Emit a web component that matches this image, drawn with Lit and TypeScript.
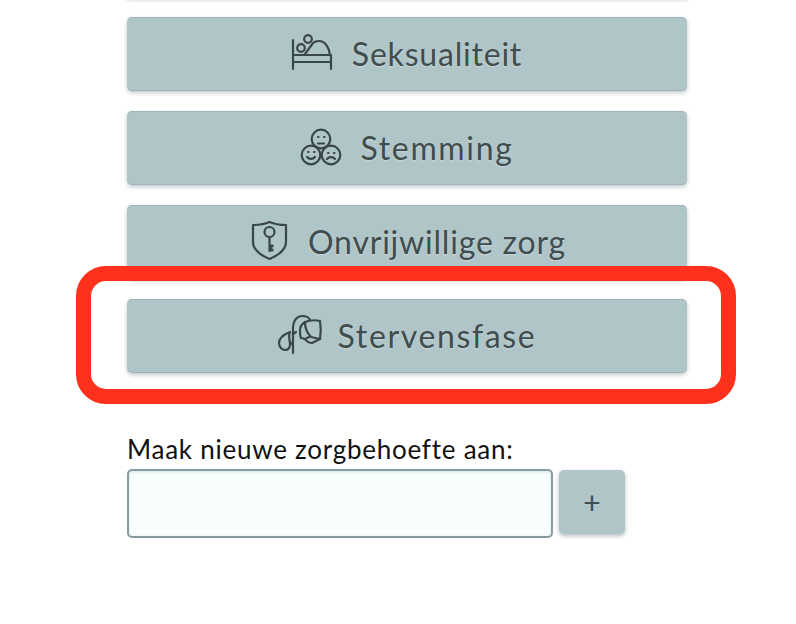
import { LitElement, css, html, svg } from 'lit';
import { customElement } from 'lit/decorators.js';

const bed = svg`
  <path d="M1 5v29M1 27h38M39 20v14M1 20h38"/>
  <path d="M13 19l8-11c2-2 4-2 6-2 6 0 10 6 11 14"/>
  <circle cx="9" cy="13" r="3.800"/>
  <circle cx="16" cy="4" r="3.800"/>
`;

const moods = svg`
  <circle cx="20" cy="10" r="9.300"/>
  <circle cx="10" cy="26" r="9.300"/>
  <circle cx="30" cy="26" r="9.300"/>
  <path d="M17 14.500h6M6 28c2 2.500 6 2.500 8 0M26 30c2-2.500 6-2.500 8 0"/>
  <path d="M17 8h.5M23 8h.5M7 23h.5M13 23h.5M27 24h.5M33 24h.5"/>
`;

const shieldKey = svg`
  <path d="M1 4c6 0 12-1 16.500-3C22 3 28 4 34 4v17c0 8-7 13-16.500 17C8 34 1 29 1 21z"/>
  <circle cx="17.500" cy="11" r="5"/>
  <path d="M17.500 16v14"/>
  <path d="M18 24h3v2h-1.500v2H21v2h-3z" class="solid"/>
`;

const wilted = svg`
  <path d="M15 38V12c0-6 4-11 9-11 4 0 7 1 8 4M15 30l-3-3M15 19l3-2"/>
  <path d="M27 7c-3 2-5 5-5 8 0 3 0 6 1 8l4 1c2 3 5 4 7 4l8-4c1-6 1-12 0-18-4-1-10-1-15 1z"/>
  <path d="M27 7c0 6 2 11 6 15l9 2M27 24l4-2"/>
  <path d="M12 17c-5 2-11 6-11 11 0 4 3 7 6 7 4 0 5-3 5-6s-2-8 0-12z"/>
`;

const items = [
  { label: 'Seksualiteit', icon: bed, box: '0 0 40 36', height: 36, wide: false },
  { label: 'Stemming', icon: moods, box: '0 0 40 36', height: 36, wide: true },
  { label: 'Onvrijwillige zorg', icon: shieldKey, box: '-4 0 40 40', height: 40, wide: false },
  { label: 'Stervensfase', icon: wilted, box: '0 0 40 40', height: 40, wide: true },
];

@customElement('app-root')
export class AppRoot extends LitElement {
  static styles = css`
    :host {
      display: block;
      position: relative;
      height: 624px;
      overflow: hidden;
      background: #fff;
      font-family: 'Lato', 'Noto Sans', sans-serif;
    }

    .content {
      display: flex;
      flex-direction: column;
      width: 560px;
      margin-left: 127px;
      padding-top: 17px;
    }

    .top-edge {
      position: absolute;
      top: 0;
      left: 127px;
      width: 560px;
      height: 0;
      box-shadow: 0 0 3px 1px rgba(40, 60, 70, 0.18);
    }

    .list {
      display: flex;
      flex-direction: column;
      gap: 20px;
    }

    .item {
      display: flex;
      align-items: center;
      justify-content: center;
      gap: 20px;
      box-sizing: border-box;
      height: 74px;
      padding: 0 0 2px;
      border: none;
      border-top: 1px solid #9db3b9;
      border-bottom: 1px solid #9db3b9;
      border-radius: 5px;
      background: #b0c5c8;
      box-shadow: 0 2px 4px rgba(40, 60, 70, 0.28);
      color: #3f4d4f;
      font: inherit;
      font-size: 32px;
      letter-spacing: 0.8px;
      text-shadow: 0 1px 2px rgba(255, 255, 255, 0.35);
    }

    .item.wide {
      letter-spacing: 1.65px;
    }

    .item svg {
      flex: none;
      overflow: visible;
      fill: none;
      stroke: #3a4749;
      stroke-width: 2.200;
      stroke-linecap: round;
      stroke-linejoin: round;
    }

    .item svg .solid {
      fill: #3a4749;
      stroke-width: 1;
    }

    .highlight {
      position: absolute;
      top: 266px;
      left: 76px;
      box-sizing: border-box;
      width: 660px;
      height: 138px;
      border: 15px solid #ff311d;
      border-radius: 30px;
    }

    .new-need {
      margin-top: 59px;
    }

    label {
      display: block;
      height: 37px;
      color: #111;
      font-size: 26px;
      line-height: 34px;
      letter-spacing: 0.75px;
    }

    .row {
      display: flex;
      align-items: flex-start;
      gap: 6px;
    }

    input {
      box-sizing: border-box;
      width: 426px;
      height: 69px;
      border: 2px solid #879c9f;
      border-radius: 5px;
      background: #f7fefd;
      box-shadow: inset 0 1px 3px rgba(40, 60, 70, 0.15);
    }

    .add {
      box-sizing: border-box;
      width: 66px;
      height: 64px;
      margin-top: 1px;
      padding: 0;
      border: none;
      border-radius: 5px;
      background: #b0c5c8;
      box-shadow: 0 2px 4px rgba(40, 60, 70, 0.35);
      color: #3f4d4f;
      font: inherit;
      font-size: 30px;
    }
  `;

  render() {
    return html`
      <div class="top-edge"></div>
      <div class="content">
        <div class="list">
          ${items.map(
            (item) => html`
              <button class="item ${item.wide ? 'wide' : ''}">
                <svg width="40" height=${item.height} viewBox=${item.box}>${item.icon}</svg>
                <span>${item.label}</span>
              </button>
            `,
          )}
        </div>
        <div class="new-need">
          <label for="need">Maak nieuwe zorgbehoefte aan:</label>
          <div class="row">
            <input id="need" type="text" />
            <button class="add">+</button>
          </div>
        </div>
      </div>
      <div class="highlight"></div>
    `;
  }
}
